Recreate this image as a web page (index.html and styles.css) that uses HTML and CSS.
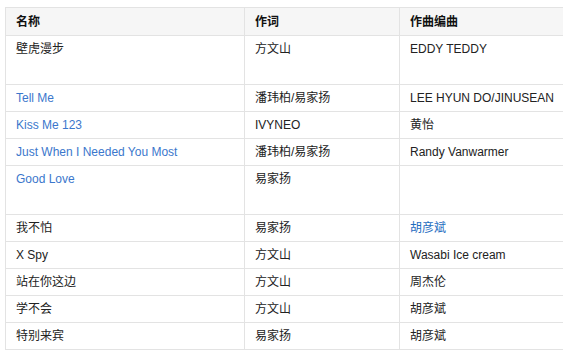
FILE: index.html
```html
<!DOCTYPE html>
<html lang="zh">
<head>
<meta charset="utf-8">
<link rel="stylesheet" href="styles.css">
</head>
<body>
<div class="wrap">
<table class="songs">
  <thead>
    <tr><th class="c1">名称</th><th class="c2">作词</th><th class="c3">作曲编曲</th></tr>
  </thead>
  <tbody>
    <tr class="tall"><td><div class="tallbox">壁虎漫步</div></td><td>方文山</td><td>EDDY TEDDY</td></tr>
    <tr><td><a class="link">Tell Me</a></td><td>潘玮柏/易家扬</td><td>LEE HYUN DO/JINUSEAN</td></tr>
    <tr><td><a class="link">Kiss Me 123</a></td><td>IVYNEO</td><td>黄怡</td></tr>
    <tr><td><a class="link">Just When I Needed You Most</a></td><td>潘玮柏/易家扬</td><td>Randy Vanwarmer</td></tr>
    <tr class="tall"><td><div class="tallbox"><a class="link">Good Love</a></div></td><td>易家扬</td><td></td></tr>
    <tr><td>我不怕</td><td>易家扬</td><td><a class="link dark">胡彦斌</a></td></tr>
    <tr><td>X Spy</td><td>方文山</td><td>Wasabi Ice cream</td></tr>
    <tr><td>站在你这边</td><td>方文山</td><td>周杰伦</td></tr>
    <tr><td>学不会</td><td>方文山</td><td>胡彦斌</td></tr>
    <tr><td>特别来宾</td><td>易家扬</td><td>胡彦斌</td></tr>
  </tbody>
</table>
</div>
</body>
</html>
```
FILE: styles.css
```css
html, body {
  margin: 0;
  padding: 0;
  background: #fff;
}
.wrap {
  padding: 7px 0 0 5px;
}
.songs {
  border-collapse: collapse;
  table-layout: fixed;
  width: 558px;
  font-family: "Liberation Sans", "Noto Sans CJK SC", sans-serif;
  font-size: 12px;
  color: #222;
}
.songs th, .songs td {
  border: 1px solid #e3e3e3;
  padding: 2px 10px;
  line-height: 22px;
  text-align: left;
  vertical-align: top;
  white-space: nowrap;
  overflow: hidden;
}
.songs th:last-child, .songs td:last-child {
  border-right: none;
  padding-right: 0;
}
.songs th {
  background: #f6f6f6;
  font-weight: bold;
  padding-top: 3px;
  color: #111;
}
.c1 { width: 218px; }
.c2 { width: 134px; }
.tallbox {
  min-height: 44px;
}
.link {
  color: #3b77cc;
  text-decoration: none;
}
.link.dark {
  color: #1f6dbf;
}
```
